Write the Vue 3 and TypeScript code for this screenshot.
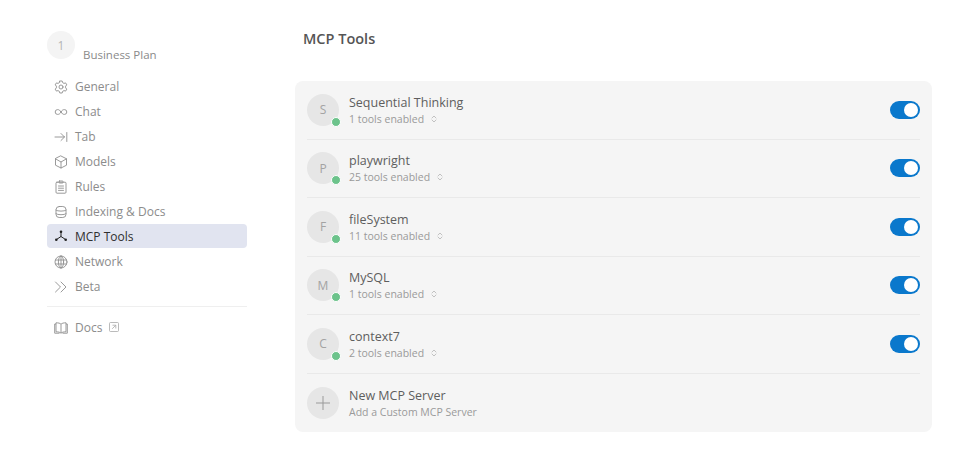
<script setup lang="ts">
interface NavItem { label: string; icon: string; active?: boolean }
const nav: NavItem[] = [
  { label: 'General', icon: 'gear' },
  { label: 'Chat', icon: 'infinity' },
  { label: 'Tab', icon: 'tab' },
  { label: 'Models', icon: 'cube' },
  { label: 'Rules', icon: 'rules' },
  { label: 'Indexing & Docs', icon: 'db' },
  { label: 'MCP Tools', icon: 'mcp', active: true },
  { label: 'Network', icon: 'globe' },
  { label: 'Beta', icon: 'beta' },
]
const servers = [
  { letter: 'S', name: 'Sequential Thinking', tools: '1 tools enabled' },
  { letter: 'P', name: 'playwright', tools: '25 tools enabled' },
  { letter: 'F', name: 'fileSystem', tools: '11 tools enabled' },
  { letter: 'M', name: 'MySQL', tools: '1 tools enabled' },
  { letter: 'C', name: 'context7', tools: '2 tools enabled' },
]
</script>

<template>
  <div class="page">
    <aside class="side">
      <div class="account">
        <div class="avatar">1</div>
        <div class="plan">Business Plan</div>
      </div>
      <nav class="nav">
        <div v-for="n in nav" :key="n.label" class="item" :class="{ active: n.active }">
          <svg class="ico" viewBox="0 0 14 14" fill="none" stroke="currentColor" stroke-width="0.9" stroke-linecap="round" stroke-linejoin="round">
            <template v-if="n.icon === 'gear'">
              <circle cx="7" cy="7" r="2" />
              <path d="M5.8 1h2.4l.4 1.6 1.4.8 1.6-.5 1.2 2-1.2 1.2v1.8l1.2 1.2-1.2 2-1.6-.5-1.4.8-.4 1.6H5.8l-.4-1.6-1.4-.8-1.6.5-1.2-2 1.2-1.2V6.100L1.200 4.900l1.200-2 1.600.5 1.400-.8z" />
            </template>
            <path v-else-if="n.icon === 'infinity'" d="M7 7C6 5.200 5 4.600 3.600 4.600a2.400 2.400 0 0 0 0 4.800C5 9.400 6 8.800 7 7c1-1.800 2-2.400 3.400-2.400a2.400 2.400 0 0 1 0 4.800C9 9.400 8 8.800 7 7z" />
            <path v-else-if="n.icon === 'tab'" d="M1 7h9.500M7 3.500 10.500 7 7 10.500M12.800 2.500v9" />
            <template v-else-if="n.icon === 'cube'">
              <path d="M7 1 12.500 3.800v6.400L7 13l-5.500-2.800V3.800z" />
              <path d="M1.500 3.800 7 7l5.500-3.200M7 7v6" />
            </template>
            <template v-else-if="n.icon === 'rules'">
              <rect x="2" y="2.200" width="10" height="11" rx="1" />
              <rect x="5" y="1" width="4" height="2" rx=".5" />
              <path d="M4.500 6h5M4.500 8.200h5M4.500 10.400h5" />
            </template>
            <template v-else-if="n.icon === 'db'">
              <rect x="2" y="1.500" width="10" height="11" rx="3.200" />
              <path d="M2 5.200c1.500 1.300 8.500 1.300 10 0M2 8.800c1.500 1.300 8.500 1.300 10 0" />
            </template>
            <template v-else-if="n.icon === 'mcp'">
              <path d="M7 3v4.500L2.500 10.500M7 7.500l4.500 3" stroke-width="1" />
              <circle cx="7" cy="2.800" r="1.300" fill="currentColor" stroke="none" />
              <circle cx="2.300" cy="10.800" r="1.300" fill="currentColor" stroke="none" />
              <circle cx="11.700" cy="10.800" r="1.300" fill="currentColor" stroke="none" />
            </template>
            <template v-else-if="n.icon === 'globe'">
              <circle cx="7" cy="7" r="6" />
              <ellipse cx="7" cy="7" rx="2.600" ry="6" />
              <path d="M1.400 5h11.200M1.400 9h11.200M7 1v12" />
            </template>
            <path v-else-if="n.icon === 'beta'" d="M1.500 2 6.500 7l-5 5M7 2l5 5-5 5" />
          </svg>
          <span>{{ n.label }}</span>
        </div>
      </nav>
      <div class="sep"></div>
      <div class="item docs">
        <svg class="ico" viewBox="0 0 14 14" fill="none" stroke="currentColor" stroke-width="0.9" stroke-linejoin="round">
          <path d="M7 3.200C6 2.200 4.500 1.800 2 1.800v9c2.500 0 4 .4 5 1.400 1-1 2.500-1.400 5-1.400v-9c-2.500 0-4 .4-5 1.400zM7 3.200v9" />
          <path d="M2 3H.7v9.200h4.800M12 3h1.300v9.200H8.500" />
        </svg>
        <span>Docs</span>
        <svg class="ext" viewBox="0 0 10 10" fill="none" stroke="currentColor" stroke-width="0.8">
          <rect x=".5" y=".5" width="9" height="9" rx="1" />
          <path d="M3.500 3.200h3.300v3.300M6.800 3.200 3.200 6.800" />
        </svg>
      </div>
    </aside>

    <main class="main">
      <h1 class="title">MCP Tools</h1>
      <section class="card">
        <div v-for="s in servers" :key="s.name" class="row">
          <div class="circle">
            {{ s.letter }}
            <span class="dot"></span>
          </div>
          <div class="info">
            <div class="name">{{ s.name }}</div>
            <div class="sub">
              <span>{{ s.tools }}</span>
              <svg class="updown" viewBox="0 0 6 8" fill="none" stroke="currentColor" stroke-width="0.7" stroke-linecap="round" stroke-linejoin="round">
                <path d="M1 3 3 1l2 2M1 5l2 2 2-2" />
              </svg>
            </div>
          </div>
          <div class="toggle"><span class="knob"></span></div>
        </div>
        <div class="row">
          <div class="circle plus">
            <svg viewBox="0 0 14 14" width="14" height="14" fill="none" stroke="#9a9a9a" stroke-width="1">
              <path d="M7 0v14M0 7h14" />
            </svg>
          </div>
          <div class="info">
            <div class="name">New MCP Server</div>
            <div class="sub"><span>Add a Custom MCP Server</span></div>
          </div>
        </div>
      </section>
    </main>
  </div>
</template>

<style>
html, body { background: #fff; }
</style>

<style scoped>
.page {
  width: 975px;
  height: 450px;
  display: flex;
  overflow: hidden;
  background: #fff;
  font-family: "Open Sans", "Noto Sans", sans-serif;
  color: #5c5c5c;
}
.side {
  width: 200px;
  margin-left: 47px;
  padding-top: 31px;
  flex: none;
}
.account {
  display: flex;
  height: 43px;
}
.avatar {
  width: 28px;
  height: 28px;
  border-radius: 50%;
  background: #f4f4f4;
  color: #b5b5b5;
  font-size: 12px;
  display: flex;
  align-items: center;
  justify-content: center;
}
.plan {
  margin-left: 8px;
  margin-top: 16px;
  font-size: 11.500px;
  line-height: 16px;
  color: #8a8a8a;
}
.nav { display: flex; flex-direction: column; }
.item {
  height: 25px;
  display: flex;
  align-items: center;
  padding-left: 7px;
  font-size: 12px;
  color: #8c8c8c;
  border-radius: 4px;
}
.item.active {
  background: #e1e4f0;
  color: #2f2f2f;
  height: 24px;
  margin: 0 0 1px;
}
.ico {
  width: 14px;
  height: 14px;
  flex: none;
  margin-right: 7px;
  color: #8e8e8e;
}
.active .ico { color: #222; }
.sep {
  height: 1px;
  background: #efefef;
  margin: 7px 0 8px;
}
.docs { height: 25px; }
.ext {
  width: 10px;
  height: 10px;
  margin-left: 7px;
  margin-top: -2px;
  color: #aaa;
}
.main {
  margin-left: 48px;
  width: 637px;
  flex: none;
}
.title {
  margin: 29px 0 0 8px;
  font-size: 14.500px;
  line-height: 20px;
  font-weight: 600;
  color: #555;
}
.card {
  margin-top: 32px;
  height: 351px;
  background: #f5f5f5;
  border-radius: 8px;
  padding: 0 12px;
  display: grid;
  grid-template-rows: repeat(6, 1fr);
}
.row {
  display: flex;
  align-items: center;
  border-bottom: 1px solid #e9e9e9;
}
.row:last-child { border-bottom: 0; }
.circle {
  position: relative;
  width: 32px;
  height: 32px;
  border-radius: 50%;
  background: #e6e6e6;
  color: #a3a3a3;
  font-size: 12px;
  display: flex;
  align-items: center;
  justify-content: center;
  flex: none;
}
.dot {
  position: absolute;
  right: -2px;
  bottom: -1px;
  width: 8px;
  height: 8px;
  border-radius: 50%;
  background: #6cc38b;
  border: 1.500px solid #fff;
}
.info { margin-left: 10px; flex: 1; }
.name {
  font-size: 12.500px;
  line-height: 17px;
  color: #5e5e5e;
}
.sub {
  font-size: 10.500px;
  line-height: 14px;
  margin-top: 1px;
  color: #9a9a9a;
  display: flex;
  align-items: center;
}
.updown {
  width: 6px;
  height: 8px;
  margin-left: 7px;
  color: #aaa;
}
.toggle {
  width: 30px;
  height: 18px;
  border-radius: 9px;
  background: #0a78cc;
  position: relative;
  flex: none;
}
.knob {
  position: absolute;
  right: 2px;
  top: 2px;
  width: 14px;
  height: 14px;
  border-radius: 50%;
  background: #fff;
}
</style>
